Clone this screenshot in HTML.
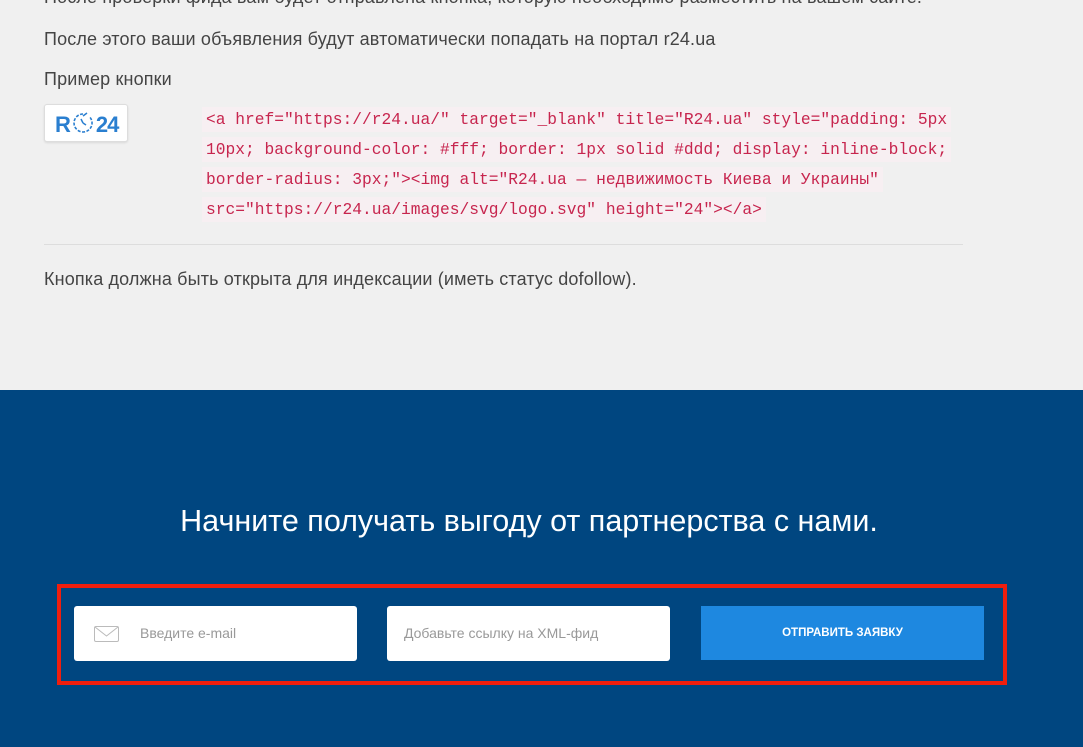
<!DOCTYPE html>
<html><head><meta charset="utf-8"><style>
*{margin:0;padding:0;box-sizing:border-box}
body{width:1083px;height:747px;overflow:hidden;background:#f0f0f0;font-family:"Liberation Sans",sans-serif;color:#444;position:relative}
.p{position:absolute;left:44px;font-size:18px;letter-spacing:0.15px;white-space:nowrap}
.logo{position:absolute;left:44px;top:104px;width:84px;height:38px;background:#fff;border:1px solid #ddd;border-radius:3px;box-shadow:0 1px 2px rgba(0,0,0,.1);color:#2a7fd0;font-size:22px;padding:6px 0 0 10px;letter-spacing:-1px}
.code{position:absolute;left:202px;top:105px;width:770px;font-family:"Liberation Mono",monospace;font-size:16.25px;line-height:30px;color:#c7254e}
.code span{background:#f7eff2;padding:3px 4px;box-decoration-break:clone;-webkit-box-decoration-break:clone}
.hr{position:absolute;left:44px;top:244px;width:919px;height:1px;background:#ddd}
.blue{position:absolute;left:0;top:390px;width:1083px;height:357px;background:#004680}
h2{position:absolute;top:504px;width:1058px;text-align:center;color:#fff;font-weight:normal;font-size:30.5px}
.red{position:absolute;left:57px;top:584px;width:950px;height:101px;border:4px solid #f01e0e}
.in{position:absolute;top:606px;width:283px;height:55px;background:#fff;border-radius:3px;color:#999;font-size:14px;line-height:55px}
.btn{position:absolute;left:701px;top:606px;width:283px;height:54px;background:#1e88e0;color:#fff;font-size:11.5px;font-weight:bold;text-align:center;line-height:54px}
</style></head><body>
<div class="p" style="top:-13px">После проверки фида вам будет отправлена кнопка, которую необходимо разместить на вашем сайте.</div>
<div class="p" style="top:29px">После этого ваши объявления будут автоматически попадать на портал r24.ua</div>
<div class="p" style="top:69px">Пример кнопки</div>
<div class="logo"><b>R</b><svg width="24" height="24" viewBox="0 0 24 24" style="vertical-align:-3px;margin:0 1px"><path d="M12 3a9 9 0 1 0 7 3.3" fill="none" stroke="#2a7fd0" stroke-width="1.6" stroke-dasharray="3 1.5"/><path d="M12 5l4 -3M12 12l-2-4M12 12l3 2" stroke="#2a7fd0" stroke-width="1.5" fill="none"/></svg><b>24</b></div>
<div class="code"><span>&lt;a href="https://r24.ua/" target="_blank" title="R24.ua" style="padding: 5px 10px; background-color: #fff; border: 1px solid #ddd; display: inline-block; border-radius: 3px;"&gt;&lt;img alt="R24.ua — недвижимость Киева и Украины" src="https://r24.ua/images/svg/logo.svg" height="24"&gt;&lt;/a&gt;</span></div>
<div class="hr"></div>
<div class="p" style="top:269px">Кнопка должна быть открыта для индексации (иметь статус dofollow).</div>
<div class="blue"></div>
<h2>Начните получать выгоду от партнерства с нами.</h2>
<div class="red"></div>
<div class="in" style="left:74px;padding-left:66px">Введите e-mail
<svg style="position:absolute;left:20px;top:20px" width="25" height="16" viewBox="0 0 25 16"><rect x="0.5" y="0.5" width="24" height="15" rx="1.5" fill="none" stroke="#bbb"/><path d="M1 1l11.5 9L24 1" fill="none" stroke="#bbb"/></svg></div>
<div class="in" style="left:387px;padding-left:17px">Добавьте ссылку на XML-фид</div>
<div class="btn">ОТПРАВИТЬ ЗАЯВКУ</div>
</body></html>
